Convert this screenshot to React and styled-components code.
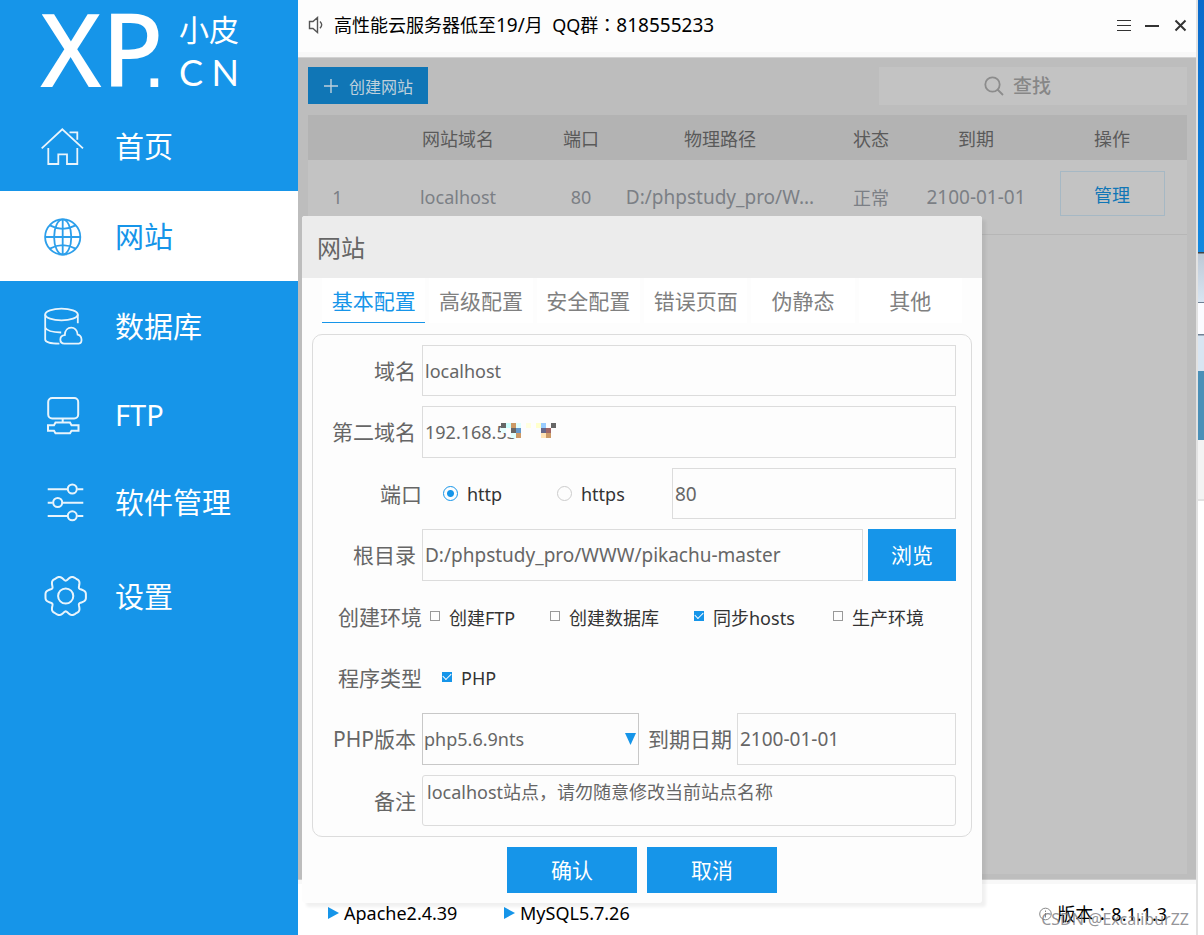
import { useState } from "react";
import styled, { createGlobalStyle } from "styled-components";

const GlobalStyle = createGlobalStyle`
  * {
    box-sizing: border-box;
  }
  body {
    margin: 0;
    background: white;
  }
  body, button, input, select, textarea {
    font-family: "Noto Sans", "Noto Sans CJK SC", sans-serif;
    font-size: 18px;
    font-weight: 400;
  }
`;

const Window = styled.div`
  display: flex;
  min-height: 100vh;
`;

const Sidebar = styled.aside`
  width: 298px;
  flex-shrink: 0;
  background: #1695e9;
  color: white;
`;

const Logo = styled.div`
  display: flex;
  height: 101px;
  padding-left: 40px;
  gap: 25px;
`;

const LogoMark = styled.div`
  display: flex;
  align-items: baseline;
  width: 114px;
  font-size: 101px;
  font-weight: 500;
  line-height: 96px;
`;

const LogoDot = styled.span`
  font-family: "Liberation Sans", sans-serif;
  font-size: 80px;
  font-weight: 400;
  margin-left: -20px;
`;

const LogoSide = styled.div`
  width: 60px;
  padding-top: 10px;
  font-size: 30px;
  line-height: 40px;
`;

const LogoLetters = styled.div`
  display: flex;
  justify-content: space-between;
  font-family: Lato, sans-serif;
  font-size: 36px;
  line-height: 44px;
`;

const Nav = styled.nav`
  display: grid;
  grid-template-rows: 90px 90px 90px 90px 82px 106px;
`;

const NavItem = styled.a`
  display: flex;
  align-items: center;
  gap: 28px;
  padding-left: 41px;
  font-size: 29px;
  text-decoration: none;
  color: ${(p) => (p.$active ? "#1695e9" : "white")};
  background: ${(p) => (p.$active ? "white" : "transparent")};
  span {
    padding-bottom: 3px;
  }
`;

const NavIcon = styled.svg`
  width: 46px;
  height: 46px;
  fill: none;
  stroke: currentColor;
  stroke-width: ${(p) => p.$stroke || 1.8};
  opacity: 0.9;
`;

const Main = styled.main`
  position: relative;
  display: flex;
  flex-direction: column;
  flex: 1;
  min-width: 0;
  border-right: 2px solid #e2e2e2;
`;

const TopBar = styled.header`
  display: flex;
  align-items: center;
  height: 57px;
  padding: 0 8px 3px 10px;
  background: #fdfdfd;
  border-bottom: 5px solid #f8f8f8;
  color: black;
`;

const Notice = styled.span`
  flex: 1;
  margin-left: 10px;
  white-space: pre;
`;

const Digits = styled.span`
  font-size: 19px;
`;

// the TC cut centres the full-width colon in its cell
const Colon = styled.span`
  font-family: "Noto Sans CJK TC", sans-serif;
`;

const WindowButtons = styled.div`
  display: flex;
  gap: 12px;
`;

const WindowButton = styled.button`
  display: flex;
  padding: 0;
  border: 0;
  background: none;
  color: #333;
`;

const Content = styled.section`
  display: flex;
  flex-direction: column;
  flex: 1;
  gap: 10px;
  padding: 9px 9px 5px 10px;
  background: #bdbdbd;
  border-top: 1px solid #d2d2d2;
  border-bottom: 1px solid #cfcfcf;
`;

const Toolbar = styled.div`
  display: flex;
  justify-content: space-between;
  height: 38px;
`;

const CreateButton = styled.button`
  display: flex;
  align-items: center;
  gap: 10px;
  width: 120px;
  height: 37px;
  padding: 0 0 0 15px;
  border: 0;
  background: #1076b6;
  color: #bfd0dc;
  font-size: 16px;
`;

const Search = styled.label`
  display: flex;
  align-items: center;
  gap: 9px;
  width: 308px;
  padding-left: 105px;
  background: #c3c3c3;
  color: #8c8c8c;
  input {
    width: 150px;
    padding: 0;
    border: 0;
    outline: 0;
    background: none;
    font-size: 19px;
    font-weight: 500;
  }
  input::placeholder {
    color: #878787;
  }
`;

const TablePanel = styled.div`
  flex: 1;
  background: #c3c3c3;
`;

const Table = styled.table`
  width: 100%;
  table-layout: fixed;
  border-collapse: collapse;
  text-align: center;
  th, td {
    padding: 0;
    font-weight: 400;
    white-space: nowrap;
  }
  th {
    height: 45px;
    background: #b3b3b3;
    color: #5a5a5a;
  }
  td {
    height: 74px;
    border-bottom: 1px solid #b6b6b6;
    color: #7b7f85;
  }
`;

const ManageButton = styled.button`
  display: block;
  width: 105px;
  height: 45px;
  margin: 0 auto 6px;
  border: 1px solid #a6b8c4;
  background: none;
  color: #1076b6;
`;

const Footer = styled.footer`
  display: flex;
  align-items: flex-start;
  height: 55px;
  padding: 15px 29px 0 30px;
  border-top: 4px solid #f8f8f8;
  background: white;
  color: black;
  line-height: 28px;
`;

const Service = styled.div`
  display: flex;
  align-items: center;
  gap: 5px;
  width: 176px;
`;

const Version = styled.div`
  display: flex;
  align-items: center;
  gap: 5px;
  margin-left: auto;
`;

const Watermark = styled.div`
  position: absolute;
  right: 7px;
  bottom: 4px;
  font-size: 16px;
  line-height: 24px;
  color: rgba(120, 120, 125, 0.8);
`;

const Desktop = styled.div`
  width: 6px;
  flex-shrink: 0;
  background: linear-gradient(
    #0a6acb 0, #1389e0 252px, #444 252px, #444 253px,
    #bdc9d6 254px, #d8e5f2 302px, #6f8093 302px, #6f8093 303px,
    #fafbff 303px, #fafbff 334px, #6f8093 334px, #6f8093 335px,
    #d8e5f2 336px, #d8e5f2 371px, #4a90b8 371px, #4a90b8 440px,
    #f3f3f3 440px, #f3f3f3 499px, #e2e2e2 499px, #e2e2e2 501px,
    white 501px
  );
`;

const Dialog = styled.div`
  position: absolute;
  top: 216px;
  left: 4px;
  width: 680px;
  background: #fdfdfd;
  border-radius: 3px;
  box-shadow: 4px 4px 3px rgba(0, 0, 0, 0.06);
  color: #666;
`;

const DialogTitle = styled.h2`
  height: 62px;
  margin: 0;
  padding: 0 15px;
  background: #ececec;
  border-radius: 3px 3px 0 0;
  font-size: 24px;
  font-weight: 400;
  line-height: 64px;
`;

const Tabs = styled.div`
  display: grid;
  grid-template-columns: repeat(6, 1fr);
  gap: 4px;
  padding: 0 20px;
`;

const Tab = styled.button`
  height: 45px;
  padding: 0 0 1px;
  border: 0;
  border-bottom: 1px solid ${(p) => (p.$active ? "#1695e9" : "transparent")};
  background: white;
  color: ${(p) => (p.$active ? "#1695e9" : "#808080")};
  font-size: 21px;
`;

const Panel = styled.form`
  display: grid;
  grid-template-columns: minmax(0, 1fr);
  grid-template-rows: 51px 52px 51px 52px 51px 51px 52px 51px;
  gap: 10px;
  margin: 11px 10px 0;
  padding: 10px 15px 10px 0;
  border: 1px solid #dcdcdc;
  border-radius: 10px;
`;

const Row = styled.div`
  position: relative;
  display: flex;
`;

const Label = styled.label`
  align-self: center;
  flex-shrink: 0;
  width: ${(p) => (p.$wide ? "109px" : "103px")};
  margin-right: ${(p) => (p.$wide ? "0" : "6px")};
  padding-bottom: 2px;
  text-align: right;
  font-size: 21px;
  white-space: nowrap;
`;

const InlineLabel = styled.label`
  align-self: center;
  margin: 0 5px 0 9px;
  padding-bottom: 2px;
  font-size: 21px;
  white-space: nowrap;
`;

const TextInput = styled.input`
  flex: 1;
  min-width: 0;
  padding: 0 2px;
  border: 1px solid #dcdcdc;
  border-radius: 0;
  outline: 0;
  background: #fdfdfd;
  color: #666;
  font-size: ${(p) => (p.$large ? "19px" : "18px")};
`;

const Note = styled.textarea`
  flex: 1;
  min-width: 0;
  padding: 3px 4px;
  border: 1px solid #dcdcdc;
  border-radius: 3px;
  outline: 0;
  resize: none;
  background: #fdfdfd;
  color: #666;
  line-height: 26px;
`;

const Mosaic = styled.svg`
  position: absolute;
  left: 188px;
  top: 17px;
`;

const BlueButton = styled.button`
  flex-shrink: 0;
  width: ${(p) => p.$width};
  height: ${(p) => p.$height};
  padding: 0 0 2px;
  border: 0;
  background: #1695e9;
  color: white;
  font-size: 21px;
`;

const BrowseButton = styled(BlueButton)`
  margin-left: 5px;
`;

const Radios = styled.div`
  display: grid;
  grid-template-columns: 114px 115px;
  margin-left: 21px;
`;

const Checks = styled.div`
  display: grid;
  grid-template-columns: 120px 144px 139px auto;
  margin-left: ${(p) => (p.$indent ? "20px" : "8px")};
`;

const Option = styled.label`
  display: flex;
  align-items: center;
  gap: 9px;
  color: #333;
  white-space: nowrap;
`;

const Radio = styled.input`
  appearance: none;
  width: 15px;
  height: 15px;
  margin: 0;
  border: 1px solid #ccc;
  border-radius: 50%;
  background: #fdfdfd;
  &:checked {
    border-color: #1695e9;
    background: radial-gradient(#1695e9 3px, #fdfdfd 4px);
  }
`;

const Checkbox = styled.input`
  appearance: none;
  display: grid;
  place-items: center;
  width: 10px;
  height: 10px;
  margin: 0 0 2px;
  border: 1px solid #999;
  background: #fdfdfd;
  &:checked {
    border-color: #1695e9;
    background: #1695e9;
  }
  &:checked::after {
    content: "";
    width: 7px;
    height: 4px;
    border: solid white;
    border-width: 0 0 1px 1px;
    transform: translateY(-1px) rotate(-45deg);
  }
`;

const SelectBox = styled.div`
  position: relative;
  width: 217px;
  select {
    appearance: none;
    width: 100%;
    height: 100%;
    padding: 0 1px;
    border: 1px solid #c8c8c8;
    border-radius: 0;
    outline: 0;
    background: #fdfdfd;
    color: #666;
  }
  svg {
    position: absolute;
    right: 3px;
    top: 20px;
    pointer-events: none;
  }
`;

const Actions = styled.div`
  display: flex;
  justify-content: center;
  gap: 10px;
  padding: 10px 0;
`;

// six flat lobes round a centre point
const gearPoints = (cx, cy) => {
  const points = [];
  for (let deg = 0; deg < 360; deg += 3) {
    const a = (deg * Math.PI) / 180;
    const r = 18.6 + 2.4 * Math.cos(6 * a) - 0.8 * Math.cos(12 * a);
    points.push(`${(cx + r * Math.cos(a)).toFixed(2)},${(cy + r * Math.sin(a)).toFixed(2)}`);
  }
  return points.join(" ");
};

const HomeIcon = () => (
  <NavIcon viewBox="0 0 46 46">
    <path d="M.7 25.3 21.3 6.3 42 25.3M28.5 9.3h7.8v7.4M7.3 25v16h10V31.3H26V41h10.3V25" />
  </NavIcon>
);

const GlobeIcon = () => (
  <NavIcon viewBox="0 0 46 46">
    <circle cx="21.7" cy="24" r="17.6" />
    <ellipse cx="21.7" cy="24" rx="8.6" ry="17.6" />
    <path d="M21.7 6.4v35.2M4 24h35.4M8.8 12.4q12.9 6.8 25.8 0M8.8 35.6q12.9-6.8 25.8 0" />
  </NavIcon>
);

const DatabaseIcon = () => (
  <NavIcon viewBox="0 0 46 46">
    <ellipse cx="20.5" cy="11.5" rx="16.3" ry="5.8" />
    <path d="M4.2 11.5v25c0 2.6 6 4.2 14.2 4.2M36.8 11.5v8.8M4.2 24.5c1.5 3.4 8 4.8 16 5" />
    <path d="M23.5 40.6c-5.6-.4-5.6-8 .3-8.4 0-10 12.6-10 12.8-.6 4.8.8 5.2 8.6 1.2 9z" />
  </NavIcon>
);

const FtpIcon = () => (
  <NavIcon viewBox="0 0 46 46" $stroke={2}>
    <rect x="7.2" y="5" width="30" height="20.4" rx="4" />
    <path d="M21.7 25.4v4M14.5 29.5h14.5l1.5 2.7h7v5.6h-7L29 40.3H14.5L13 37.8H7v-5.6h6z" />
  </NavIcon>
);

const SlidersIcon = () => (
  <NavIcon viewBox="0 0 46 46" $stroke={2}>
    <path d="M6.7 10.3h19.6M36.3 10.3h6M6.7 23.7h5M21.7 23.7h20.6M6.7 37h19.6M36.3 37h6" />
    <circle cx="31.3" cy="10" r="4.5" />
    <circle cx="16.7" cy="23.5" r="4.5" />
    <circle cx="31.3" cy="36.8" r="4.5" />
  </NavIcon>
);

const GearIcon = () => (
  <NavIcon viewBox="0 0 46 46" $stroke={2}>
    <polygon points={gearPoints(24.7, 23)} />
    <circle cx="24.7" cy="23" r="7.6" />
  </NavIcon>
);

const navItems = [
  { name: "首页", Icon: HomeIcon },
  { name: "网站", Icon: GlobeIcon },
  { name: "数据库", Icon: DatabaseIcon },
  { name: "FTP", Icon: FtpIcon },
  { name: "软件管理", Icon: SlidersIcon },
  { name: "设置", Icon: GearIcon },
];

const tabs = ["基本配置", "高级配置", "安全配置", "错误页面", "伪静态", "其他"];

// x, y, colour of each 5px block
const mosaicBlocks = [
  [0, 0, "#666666"], [5, 0, "#ccffff"], [10, 0, "#cc9966"], [15, 0, "#e0ffff"],
  [25, 0, "#ffffe0"], [35, 0, "#ffffcc"], [40, 0, "#99ccff"], [50, 0, "#666666"],
  [0, 5, "#e6ffff"], [5, 5, "#fdfdfd"], [10, 5, "#666666"], [15, 5, "#6699cc"],
  [40, 5, "#666688"], [45, 5, "#a06666"],
  [10, 10, "#e0ffff"], [15, 10, "#cc9966"], [40, 10, "#ffe2b4"], [45, 10, "#cc9966"],
];

const PlayIcon = () => (
  <svg width="11" height="12" viewBox="0 0 11 12">
    <path d="M0 0 11 6 0 12z" fill="#1695e9" />
  </svg>
);

const SiteTable = () => (
  <Table>
    <colgroup>
      <col style={{ width: 59 }} />
      <col style={{ width: 182 }} />
      <col style={{ width: 64 }} />
      <col />
      <col style={{ width: 88 }} />
      <col style={{ width: 122 }} />
      <col style={{ width: 150 }} />
    </colgroup>
    <thead>
      <tr>
        <th></th>
        <th>网站域名</th>
        <th>端口</th>
        <th>物理路径</th>
        <th>状态</th>
        <th>到期</th>
        <th>操作</th>
      </tr>
    </thead>
    <tbody>
      <tr>
        <td>1</td>
        <td>localhost</td>
        <td>80</td>
        <td><Digits>D:/phpstudy_pro/W...</Digits></td>
        <td>正常</td>
        <td><Digits>2100-01-01</Digits></td>
        <td>
          <ManageButton>管理</ManageButton>
        </td>
      </tr>
    </tbody>
  </Table>
);

const SiteDialog = () => {
  const [tab, setTab] = useState("基本配置");

  return (
    <Dialog role="dialog" aria-labelledby="dialog-title">
      <DialogTitle id="dialog-title">网站</DialogTitle>
      <Tabs>
        {tabs.map((name) => (
          <Tab key={name} $active={name === tab} onClick={() => setTab(name)}>
            {name}
          </Tab>
        ))}
      </Tabs>
      <Panel>
        <Row>
          <Label htmlFor="domain">域名</Label>
          <TextInput id="domain" defaultValue="localhost" />
        </Row>
        <Row>
          <Label htmlFor="domain2">第二域名</Label>
          <TextInput id="domain2" defaultValue="192.168.53" />
          <Mosaic width="55" height="15" shapeRendering="crispEdges">
            {mosaicBlocks.map(([x, y, fill]) => (
              <rect key={`${x}-${y}`} x={x} y={y} width="5" height="5" fill={fill} />
            ))}
          </Mosaic>
        </Row>
        <Row>
          <Label $wide htmlFor="port">端口</Label>
          <Radios>
            <Option>
              <Radio type="radio" name="protocol" defaultChecked />
              http
            </Option>
            <Option>
              <Radio type="radio" name="protocol" />
              https
            </Option>
          </Radios>
          <TextInput id="port" defaultValue="80" $large />
        </Row>
        <Row>
          <Label htmlFor="root-dir">根目录</Label>
          <TextInput id="root-dir" defaultValue="D:/phpstudy_pro/WWW/pikachu-master" $large />
          <BrowseButton type="button" $width="88px" $height="52px">浏览</BrowseButton>
        </Row>
        <Row>
          <Label as="span" $wide>创建环境</Label>
          <Checks>
            <Option><Checkbox type="checkbox" />创建FTP</Option>
            <Option><Checkbox type="checkbox" />创建数据库</Option>
            <Option><Checkbox type="checkbox" defaultChecked />同步hosts</Option>
            <Option><Checkbox type="checkbox" />生产环境</Option>
          </Checks>
        </Row>
        <Row>
          <Label as="span" $wide>程序类型</Label>
          <Checks $indent>
            <Option><Checkbox type="checkbox" defaultChecked />PHP</Option>
          </Checks>
        </Row>
        <Row>
          <Label htmlFor="php">PHP版本</Label>
          <SelectBox>
            <select id="php">
              <option>php5.6.9nts</option>
            </select>
            <svg width="11" height="12" viewBox="0 0 11 12">
              <path d="M0 0h11L5.5 12z" fill="#1695e9" />
            </svg>
          </SelectBox>
          <InlineLabel htmlFor="expire">到期日期</InlineLabel>
          <TextInput id="expire" defaultValue="2100-01-01" $large />
        </Row>
        <Row>
          <Label htmlFor="note">备注</Label>
          <Note id="note" defaultValue="localhost站点，请勿随意修改当前站点名称" />
        </Row>
      </Panel>
      <Actions>
        <BlueButton $width="130px" $height="46px">确认</BlueButton>
        <BlueButton $width="130px" $height="46px">取消</BlueButton>
      </Actions>
    </Dialog>
  );
};

export default function App() {
  return (
    <>
      <GlobalStyle />
      <Window>
        <Sidebar>
          <Logo>
            <LogoMark>
              XP<LogoDot>.</LogoDot>
            </LogoMark>
            <LogoSide>
              小皮
              <LogoLetters>
                <span>C</span>
                <span>N</span>
              </LogoLetters>
            </LogoSide>
          </Logo>
          <Nav>
            {navItems.map(({ name, Icon }) => (
              <NavItem key={name} href="#" $active={name === "网站"}>
                <Icon />
                <span>{name}</span>
              </NavItem>
            ))}
          </Nav>
        </Sidebar>
        <Main>
          <TopBar>
            <svg width="16" height="18" viewBox="0 0 16 18" fill="none" stroke="#555" strokeWidth="1.4">
              <path d="M1.5 5.5h3.5L9.5 1.5v15L5 12.5H1.500zM12 5.5q3.400 3.300 0 6.800" />
            </svg>
            <Notice>
              高性能云服务器低至<Digits>19/</Digits>月{"  "}QQ群<Colon>：</Colon><Digits>818555233</Digits>
            </Notice>
            <WindowButtons>
              <WindowButton aria-label="菜单">
                <svg width="16" height="16" stroke="currentColor">
                  <path d="M1 3.5h14M1 8.5h14M1 13.5h14" />
                </svg>
              </WindowButton>
              <WindowButton aria-label="最小化">
                <svg width="16" height="16" stroke="currentColor" strokeWidth="2">
                  <path d="M1 9h14" />
                </svg>
              </WindowButton>
              <WindowButton aria-label="关闭">
                <svg width="16" height="16" stroke="currentColor" strokeWidth="2">
                  <path d="M3.5 3.5l10 10M13.5 3.5l-10 10" />
                </svg>
              </WindowButton>
            </WindowButtons>
          </TopBar>
          <Content>
            <Toolbar>
              <CreateButton>
                <svg width="16" height="16" stroke="currentColor" strokeWidth="1.4">
                  <path d="M8 1v14M1 8h14" />
                </svg>
                创建网站
              </CreateButton>
              <Search>
                <svg width="20" height="20" fill="none" stroke="currentColor" strokeWidth="1.8">
                  <circle cx="8.5" cy="8.5" r="7.2" />
                  <path d="M13.5 13.5l5.5 5.5" />
                </svg>
                <input placeholder="查找" aria-label="查找" />
              </Search>
            </Toolbar>
            <TablePanel>
              <SiteTable />
            </TablePanel>
          </Content>
          <Footer>
            <Service><PlayIcon />Apache2.4.39</Service>
            <Service><PlayIcon />MySQL5.7.26</Service>
            <Version>
              <svg width="13" height="14" fill="none" stroke="#888">
                <circle cx="6.5" cy="7" r="5.8" />
                <path d="M6.5 3.5v1.5M6.5 6v4.5" />
              </svg>
              <span>版本<Colon>：</Colon>8.1.1.3</span>
            </Version>
          </Footer>
          <SiteDialog />
          <Watermark>CSDN @ExcaliburZZ</Watermark>
        </Main>
        <Desktop />
      </Window>
    </>
  );
}
